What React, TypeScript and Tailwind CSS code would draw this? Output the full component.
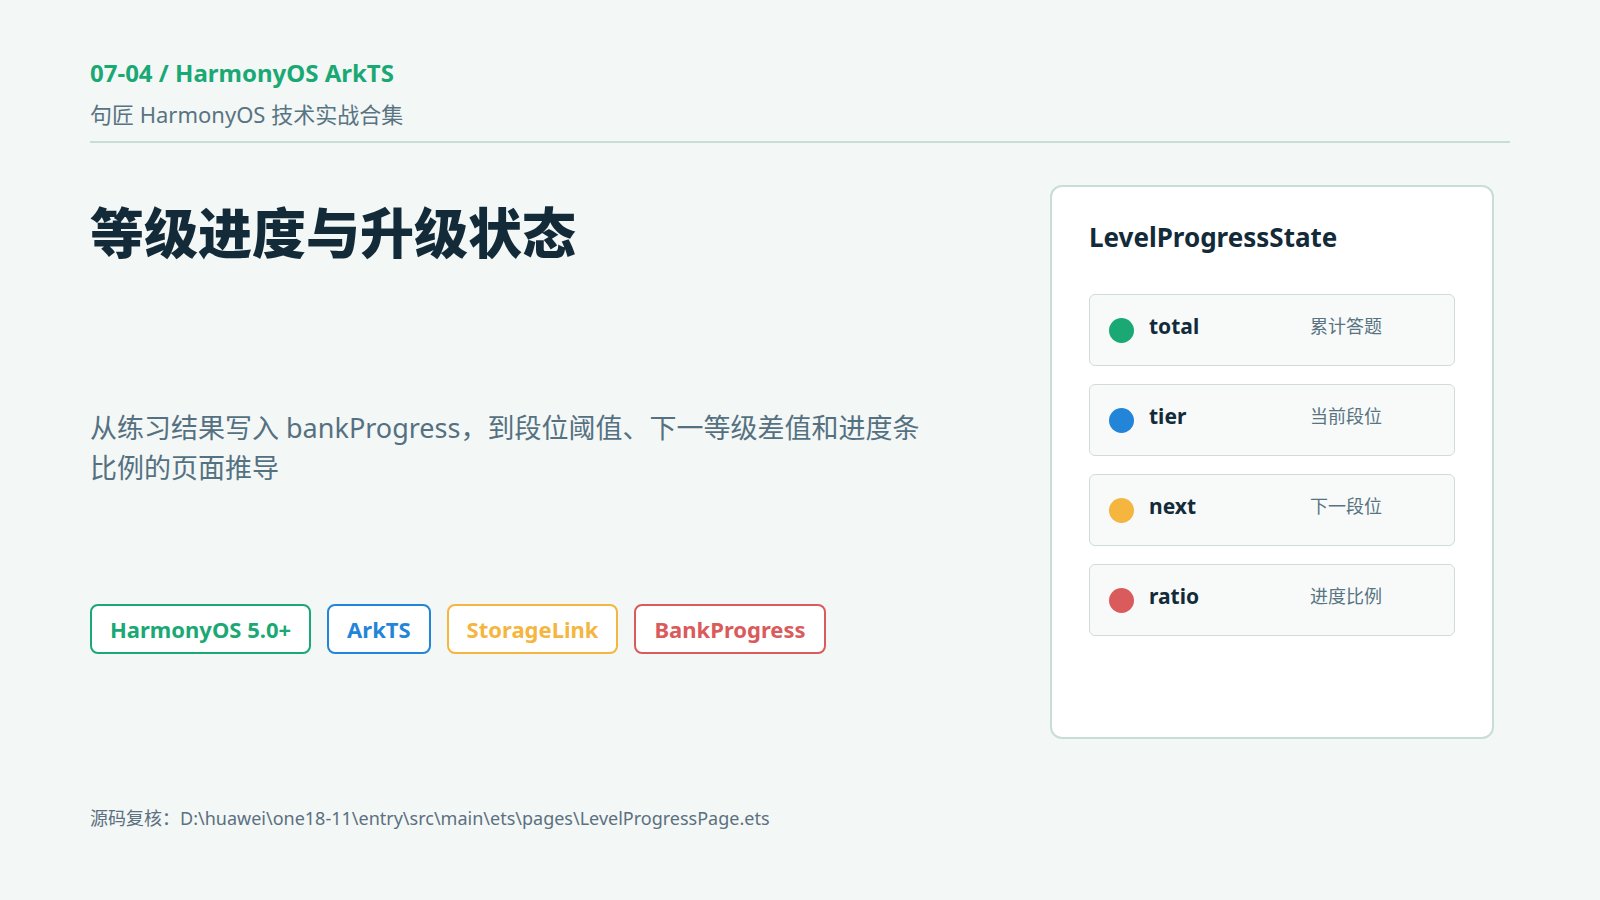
import React from 'react';

const tags = [
  { label: 'HarmonyOS 5.0+', cls: 'border-[#1aa874] text-[#1aa874]' },
  { label: 'ArkTS', cls: 'border-[#2385d8] text-[#2385d8]' },
  { label: 'StorageLink', cls: 'border-[#f4b63f] text-[#f4b63f]' },
  { label: 'BankProgress', cls: 'border-[#d95b5b] text-[#d95b5b]' },
];

const fields = [
  { name: 'total', desc: '累计答题', dot: 'bg-[#1aa874]' },
  { name: 'tier', desc: '当前段位', dot: 'bg-[#2385d8]' },
  { name: 'next', desc: '下一段位', dot: 'bg-[#f4b63f]' },
  { name: 'ratio', desc: '进度比例', dot: 'bg-[#d95b5b]' },
];

function Header() {
  return (
    <header className="border-b-2 border-[#c9ddd7] pb-[11px]">
      <div className="text-[24px] font-bold leading-[32px] text-[#1aa874]">07-04 / HarmonyOS ArkTS</div>
      <div className="mt-[9px] text-[22px] leading-[32px] text-[#587482]">句匠 HarmonyOS 技术实战合集</div>
    </header>
  );
}

function StateCard() {
  return (
    <aside className="mr-4 mt-[42px] flex h-[554px] w-[444px] shrink-0 flex-col rounded-xl border-2 border-[#c9ddd7] bg-white px-[37px] pt-[32px]">
      <h2 className="text-[26px] font-bold leading-[36px] text-[#132b39]">LevelProgressState</h2>
      <div className="mt-[39px] flex flex-col gap-[18px]">
        {fields.map((f) => (
          <div
            key={f.name}
            className="flex h-[72px] items-center rounded-md border border-[#cfdcd8] bg-[#f7faf9] pl-[19px]"
          >
            <span className={`h-[25px] w-[25px] shrink-0 rounded-full ${f.dot}`} />
            <div className="flex items-center pb-[9px]">
              <span className="ml-[15px] w-[161px] text-[21px] font-bold leading-[28px] text-[#132b39]">{f.name}</span>
              <span className="text-[18px] leading-[28px] text-[#587482]">{f.desc}</span>
            </div>
          </div>
        ))}
      </div>
    </aside>
  );
}

export default function App() {
  return (
    <div
      className="h-[900px] w-[1600px] overflow-hidden bg-[#f3f7f6] px-[90px] pt-[57px]"
      style={{ fontFamily: '"Noto Sans", "Noto Sans CJK SC", sans-serif' }}
    >
      <Header />
      <div className="flex justify-between">
        <main className="flex flex-col">
          <h1 className="mt-[58px] text-[54px] font-black leading-[65px] text-[#132b39]">等级进度与升级状态</h1>
          <p className="mt-[142px] max-w-[845px] text-[27px] leading-[40px] text-[#557181]">
            从练习结果写入 bankProgress，到段位阈值、下一等级差值和进度条比例的页面推导
          </p>
          <div className="mt-[116px] flex gap-4">
            {tags.map((t) => (
              <span
                key={t.label}
                className={`flex h-[50px] items-center rounded-lg border-2 bg-white px-[18px] text-[22px] font-bold ${t.cls}`}
              >
                {t.label}
              </span>
            ))}
          </div>
          <p className="mt-[150px] text-[18px] leading-[28px] text-[#5b7080]">
            源码复核：D:\huawei\one18-11\entry\src\main\ets\pages\LevelProgressPage.ets
          </p>
        </main>
        <StateCard />
      </div>
    </div>
  );
}
